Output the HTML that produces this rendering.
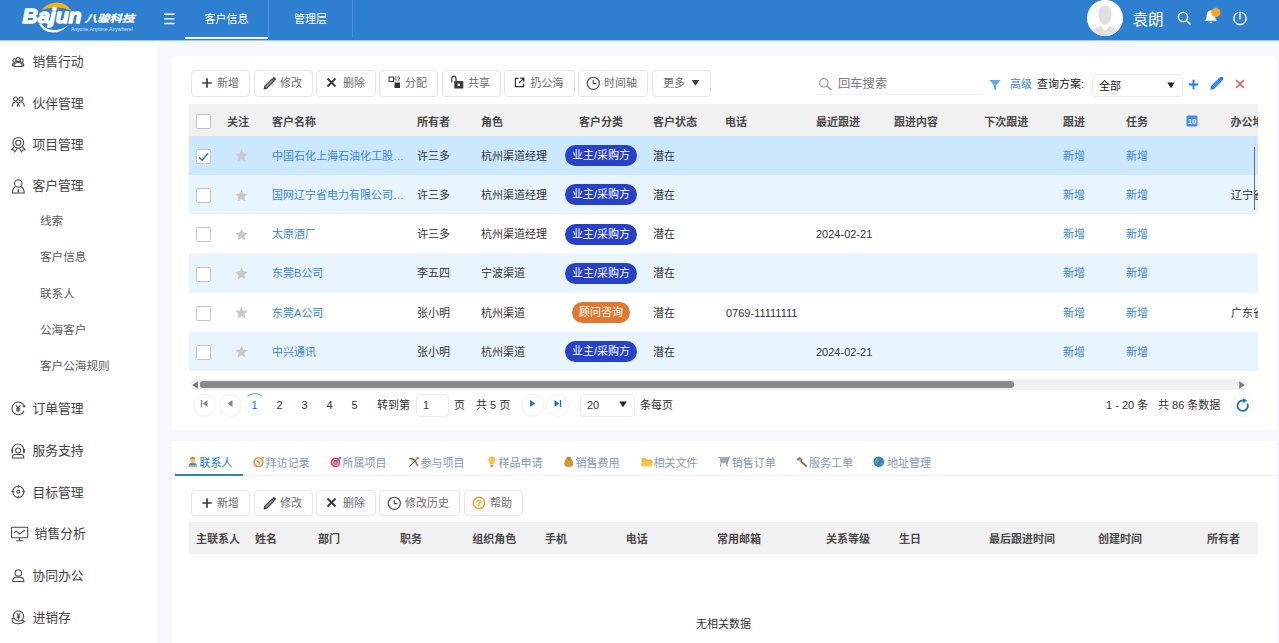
<!DOCTYPE html>
<html lang="zh-CN">
<head>
<meta charset="utf-8">
<title>客户信息</title>
<style>
*{box-sizing:border-box;margin:0;padding:0}
html,body{width:1279px;height:643px;overflow:hidden;background:#f7f8fd;font-family:"Liberation Sans","Noto Sans CJK SC",sans-serif;font-size:12px;color:#333}
.abs{position:absolute}
#hdr{z-index:2;position:absolute;left:0;top:0;width:1279px;height:41px;background:linear-gradient(#2f7fd1 0,#2f7fd1 40px,#a5c8ee 40px,#a5c8ee 41px)}
#side{position:absolute;left:0;top:40px;width:157px;height:603px;background:#fff}
.mi{position:absolute;left:32.400px;font-size:12.800px;color:#444;line-height:20px;white-space:nowrap}
.si{position:absolute;left:40px;font-size:11.600px;color:#5c5c5c;line-height:18px;white-space:nowrap}
.ico{position:absolute;left:10px}
.card{position:absolute;background:#fff;border-radius:4px}
.btn{position:absolute;height:26.500px;border:1px solid #e6e6e6;border-radius:4px;background:#fff;font-size:11px;color:#6c6c6c;line-height:26px;white-space:nowrap}
.btn span{position:absolute;top:-0.800px}
.th{position:absolute;font-weight:bold;font-size:11px;color:#4a4a4a;line-height:16px;white-space:nowrap}
.td{position:absolute;font-size:11px;color:#333;line-height:16px;white-space:nowrap}
.lk{color:#3b87d6}
.row{position:absolute;left:191px;width:1067px;height:39px}
.cb{position:absolute;left:196px;width:15px;height:15px;border:1px solid #c4c4c4;border-radius:1.500px;background:#fff}
.pill{position:absolute;left:566px;width:69px;height:21px;border-radius:11px;background:#2741c8;color:#fff;font-size:11px;line-height:21px;text-align:center;white-space:nowrap}
.tab{position:absolute;top:454.500px;font-size:11px;color:#6e8db8;line-height:16px;white-space:nowrap}
.pg{position:absolute;font-size:11px;color:#333;line-height:16px;white-space:nowrap}
</style>
</head>
<body>
<div id="hdr">
  <!-- logo -->
  <svg class="abs" style="left:15px;top:0" width="130" height="40" viewBox="0 0 130 40">
    <path d="M26.500 9.900 Q32.500 3 41 2.500 Q51.800 2.200 56.300 11 Q49.500 7.600 40.600 7.600 Q33 7.800 26.500 9.900Z" fill="#f6b414"/>
    <path d="M24.400 23.900 Q27 31.500 37.600 32.500 Q46.500 32.500 52.800 25.400 Q45.500 30.300 38.600 30 Q30.500 29.600 26.400 23.900Z" fill="#fff"/>
    <text x="7.600" y="22.900" font-family="Liberation Sans,sans-serif" font-style="italic" font-weight="bold" font-size="21" fill="#fff" stroke="#fff" stroke-width="1.300" stroke-linejoin="round" textLength="59" lengthAdjust="spacingAndGlyphs">Bajun</text>
    <text x="69.800" y="21.900" font-family="Liberation Sans,Noto Sans CJK SC,sans-serif" font-style="italic" font-weight="bold" font-size="10" fill="#fff" stroke="#fff" stroke-width="0.250" textLength="49.500" lengthAdjust="spacingAndGlyphs">八骏科技</text>
    <text x="55.900" y="30.900" font-family="Liberation Sans,sans-serif" font-size="4.900" fill="#dce9f8" textLength="62" lengthAdjust="spacingAndGlyphs">Anyone,Anytime,Anywhere!</text>
  </svg>
  <!-- hamburger -->
  <svg class="abs" style="left:163px;top:12px" width="13" height="13" viewBox="0 0 13 13"><path d="M1 2.300H11.600M1 6.900H11.600M1 11.500H11.600" stroke="#fff" stroke-width="1.400"/></svg>
  <!-- tabs -->
  <div class="abs" style="left:185px;top:0;width:84px;height:37px;border-right:1px solid #4c90d9;color:#fff;font-size:11px;line-height:38.600px;text-align:center">客户信息</div>
  <div class="abs" style="left:185px;top:37px;width:83px;height:2px;background:#fff"></div>
  <div class="abs" style="left:269px;top:0;width:84px;height:37px;border-right:1px solid #4c90d9;color:#fff;font-size:11px;line-height:38.600px;text-align:center">管理层</div>
  <!-- right -->
  <div class="abs" style="left:1087px;top:0;width:36px;height:36px;border-radius:18px;background:#fff;overflow:hidden">
    <svg width="36" height="36" viewBox="0 0 36 36"><path d="M11.500 13Q11.500 5.500 18 5.500Q24.500 5.500 24.500 13Q24.500 19 22 22.500Q20 24.800 18 24.800Q16 24.800 14 22.500Q11.500 19 11.500 13Z" fill="#e0e0e0"/><path d="M3 36 Q4 28.500 13.500 26 L18 31 L22.500 26 Q32 28.500 33 36Z" fill="#e0e0e0"/></svg>
  </div>
  <div class="abs" style="left:1132.500px;top:8.600px;color:#fff;font-size:15.600px;line-height:22px">袁朗</div>
  <svg class="abs" style="left:1175.900px;top:10.300px" width="16" height="16" viewBox="0 0 16 16"><circle cx="7" cy="7" r="4.600" fill="none" stroke="#fff" stroke-width="1.300"/><path d="M10.500 10.500L14 14" stroke="#fff" stroke-width="1.300" stroke-linecap="round"/></svg>
  <svg class="abs" style="left:1200.800px;top:4.800px" width="22" height="22" viewBox="0 0 20 20"><path d="M9 5 C6 5 5.200 7.500 5.200 10 C5.200 12.500 4 13.700 3.300 14.300 L14.700 14.300 C14 13.700 12.800 12.500 12.800 10 C12.800 7.500 12 5 9 5Z" fill="#fff"/><path d="M7.500 15.300 Q9 17.800 10.500 15.300Z" fill="#fff"/><circle cx="13.500" cy="6.800" r="4.200" fill="#f8a51c"/></svg>
  <svg class="abs" style="left:1231.700px;top:10.250px" width="16" height="16" viewBox="0 0 16 16"><path d="M5.800 2.500 A6.200 6.200 0 1 0 10.200 2.500" fill="none" stroke="#fff" stroke-width="1.300" stroke-linecap="round"/><path d="M8 2.200V8.800" stroke="#fff" stroke-width="1.300" stroke-linecap="round"/></svg>
</div>

<div id="side">
  <svg class="abs" style="left:0;top:-40px" width="34" height="683" viewBox="0 0 34 683" fill="none" stroke="#484848" stroke-width="1.050">
    <!-- sales action: group of 3 -->
    <circle cx="14.600" cy="60.400" r="1.700"/><circle cx="21.600" cy="60.400" r="1.700"/>
    <path d="M13.800 65.800H12.500Q12.200 63.200 14.400 62.700M22.400 65.800H23.700Q24 63.200 21.800 62.700"/>
    <circle cx="18.100" cy="59.500" r="2.100" fill="#fff"/><path d="M14 66.400Q13.600 62.500 18.100 62.500Q22.600 62.500 22.200 66.400Z" fill="#fff"/>
    <!-- partner: 2 people -->
    <circle cx="15.600" cy="99" r="2"/><circle cx="20.900" cy="99" r="2"/>
    <path d="M12.300 106.600Q12.600 102 15.600 102Q18.400 102 19.500 106.600M17 106.600Q18.100 102 20.900 102Q23.900 102 24.300 106.600"/>
    <!-- project: medal -->
    <circle cx="18.300" cy="142.800" r="5.400"/><circle cx="18.300" cy="142.800" r="2.600"/>
    <path d="M14.300 146.600L11.600 149.800L14 149.900L14.900 152L17.300 148.300M22.300 146.600L25 149.800L22.600 149.900L21.700 152L19.300 148.300"/>
    <!-- customer: person with tie -->
    <circle cx="18.300" cy="183.400" r="3.700"/>
    <path d="M15.600 186.500Q12.600 188 12.300 193H24.300Q24 188 21 186.500"/>
    <path d="M18.300 189V192.600" stroke-width="1.300"/>
    <!-- order: yen in refresh circle -->
    <path d="M24.300 406.600A6.300 6.300 0 1 0 24 411"/><path d="M22.800 406.300L24.600 406.800L24.900 405"/>
    <path d="M15.800 405L18.100 407.800L20.400 405M18.100 407.800V412.200M15.900 408.300H20.300M15.900 410.100H20.300"/>
    <!-- service: headset -->
    <circle cx="18.100" cy="450.400" r="2.500"/>
    <path d="M12.500 451V449.600A5.600 5.600 0 0 1 23.700 449.600V451"/>
    <path d="M12.300 449.400V452.300M23.900 449.400V452.300" stroke-width="1.800" stroke-linecap="round"/>
    <path d="M12.400 458Q12.400 454.400 15 454.400H21.200Q23.800 454.400 23.800 458Z"/>
    <!-- target -->
    <circle cx="18.300" cy="491.800" r="5.600"/><circle cx="18.300" cy="491.800" r="1.500"/>
    <path d="M18.300 485V487.800M18.300 495.800V498.600M11.500 491.800H14.300M22.300 491.800H25.100"/>
    <!-- analysis: monitor -->
    <rect x="11.500" y="527.200" width="16.200" height="10.500" rx="0.800"/>
    <path d="M13.800 533.200L16.300 531.200L19.700 534L24.800 530.200M19.600 537.700V540.600M16.200 540.800H23"/>
    <!-- cooperate: person -->
    <circle cx="18.300" cy="572.900" r="3.200"/>
    <path d="M12.700 581.500Q12.700 577.200 16.500 577.200H20.100Q23.900 577.200 23.900 581.500Z"/>
    <!-- inventory: yen coin in hand -->
    <path d="M14.800 619.500A5.100 5.100 0 1 1 21.700 620"/>
    <path d="M16.700 613.300L18.500 615.600L20.300 613.300M18.500 615.600V619.500M16.800 616.200H20.200M16.800 617.700H20.200"/>
    <path d="M12.200 618.400Q14.500 618 16 620Q17.500 621.300 20 620.800Q23.500 620 24.500 621.600Q21 624.200 17.500 623.700Q14 623.300 12.200 621.800Z"/>
  </svg>

  <!-- y values relative to #side (top:40) -->
  <div class="mi" style="top:12px">销售行动</div>
  <div class="mi" style="top:54px">伙伴管理</div>
  <div class="mi" style="top:95px">项目管理</div>
  <div class="mi" style="top:136px">客户管理</div>

  <div class="si" style="top:172px">线索</div>
  <div class="si" style="top:208.400px">客户信息</div>
  <div class="si" style="top:244.600px">联系人</div>
  <div class="si" style="top:280.600px">公海客户</div>
  <div class="si" style="top:317px">客户公海规则</div>
  <div class="mi" style="top:359px">订单管理</div>
  <div class="mi" style="top:401px">服务支持</div>
  <div class="mi" style="top:443px">目标管理</div>
  <div class="mi" style="top:484px;left:34.600px">销售分析</div>
  <div class="mi" style="top:526px">协同办公</div>
  <div class="mi" style="top:568px">进销存</div>
</div>

<div class="card" id="c1" style="left:172px;top:56px;width:1104px;height:374px;border-radius:5px 5px 0 0"></div>
<div class="card" id="c2" style="left:172px;top:440.500px;width:1104px;height:215px;border-radius:0"></div>

<!--MAIN-->
<div class="btn" style="left:191px;top:70px;width:59px"><svg class="abs" style="left:8.700px;top:5.500px" width="12" height="12" viewBox="0 0 12 12"><path d="M6 1.300V10.700M1.300 6H10.700" stroke="#3a3a3a" stroke-width="1.700"/></svg><span style="left:25px">新增</span></div>
<div class="btn" style="left:254px;top:70px;width:59px"><svg class="abs" style="left:6.500px;top:4.700px" width="15" height="15" viewBox="0 0 15 15"><path d="M2.200 12.800L2.900 10.200L10 3.100L11.900 5L4.800 12.100Z" fill="#a0a0a0" stroke="#3a3a3a" stroke-width="1.100" stroke-linejoin="round"/><path d="M1.800 13.200L2.500 10.600L4.400 12.500Z" fill="#3a3a3a"/><path d="M10.300 2.200L11.300 1.200Q12 0.700 12.700 1.400L13.600 2.300Q14.200 3 13.700 3.700L12.700 4.700Z" fill="#3a3a3a"/></svg><span style="left:25px">修改</span></div>
<div class="btn" style="left:316px;top:70px;width:60px"><svg class="abs" style="left:9.200px;top:6px" width="11" height="11" viewBox="0 0 11 11"><path d="M1.500 1.500L9.500 9.500M9.500 1.500L1.500 9.500" stroke="#3a3a3a" stroke-width="1.900"/></svg><span style="left:26px">删除</span></div>
<div class="btn" style="left:379px;top:70px;width:59px"><svg class="abs" style="left:7.500px;top:5px" width="13" height="13" viewBox="0 0 13 13"><rect x="1" y="1" width="4.500" height="4.500" fill="none" stroke="#333" stroke-width="1"/><rect x="7" y="1" width="4.500" height="3" fill="none" stroke="#333" stroke-width="1" stroke-dasharray="1.500 1"/><rect x="6.500" y="6.500" width="5.500" height="5.500" fill="#333"/></svg><span style="left:25px">分配</span></div>
<div class="btn" style="left:442px;top:70px;width:59px"><svg class="abs" style="left:7px;top:4.300px" width="14" height="15" viewBox="0 0 14 15"><path d="M1.800 7.500V3.800Q1.800 1.200 3.900 1.200Q6 1.200 6 3.800V6" fill="none" stroke="#3a3a3a" stroke-width="1.200"/><rect x="4.300" y="6" width="9" height="7.500" rx="0.500" fill="#3a3a3a"/><rect x="7.600" y="8.600" width="2.400" height="2.400" fill="#fff"/></svg><span style="left:25px">共享</span></div>
<div class="btn" style="left:504px;top:70px;width:71px"><svg class="abs" style="left:9px;top:5.700px" width="11" height="11" viewBox="0 0 12 12"><path d="M5 1.500H1.500V10.500H10.500V7" fill="none" stroke="#333" stroke-width="1.300"/><path d="M5.500 6.500L10.500 1.500M6.800 1.300H10.700V5.200" fill="none" stroke="#333" stroke-width="1.400"/></svg><span style="left:25.6px">扔公海</span></div>
<div class="btn" style="left:578px;top:70px;width:70px"><svg class="abs" style="left:6.700px;top:4.600px" width="14.600" height="14.600" viewBox="0 0 14 14"><circle cx="7" cy="7" r="5.800" fill="none" stroke="#4a4a4a" stroke-width="1.100"/><path d="M7 3.500V7.300H10" fill="none" stroke="#4a4a4a" stroke-width="1.100"/></svg><span style="left:25px">时间轴</span></div>
<div class="btn" style="left:652px;top:70px;width:59px"><svg class="abs" style="left:38px;top:8px" width="9" height="8" viewBox="0 0 9 8"><path d="M0.700 1H8.300L4.500 6.800Z" fill="#3a3a3a"/></svg><span style="left:10px">更多</span></div>
<svg class="abs" style="left:818px;top:77px" width="14" height="14" viewBox="0 0 14 14"><circle cx="5.800" cy="5.800" r="4.200" fill="none" stroke="#999" stroke-width="1.100"/><path d="M9 9L12.800 12.800" stroke="#999" stroke-width="1.500" stroke-linecap="round"/></svg>
<div class="abs" style="left:838px;top:75px;font-size:12.300px;line-height:18px;color:#7a7a7a">回车搜索</div>
<div class="abs" style="left:817px;top:94px;width:165px;height:1px;background:#f3f3f3"></div>
<svg class="abs" style="left:989px;top:78.500px" width="12" height="12" viewBox="0 0 12 12"><path d="M0.500 1H11.500L7.200 6.200V11.300L4.800 9.800V6.200Z" fill="#62a6ec"/></svg>
<div class="abs lk" style="left:1010px;top:76px;font-size:11px;line-height:16px">高级</div>
<div class="abs" style="left:1037px;top:76px;font-size:11px;line-height:16px;color:#222">查询方案:</div>
<div class="abs" style="left:1092px;top:74px;width:91px;height:23px;border:1px solid #ebebeb;border-radius:4px;background:#fff"></div>
<div class="abs" style="left:1099px;top:77.700px;font-size:11px;line-height:16px;color:#222">全部</div>
<svg class="abs" style="left:1167px;top:82px" width="8" height="7" viewBox="0 0 8 7"><path d="M0.300 0.500H7.700L4 6.300Z" fill="#222"/></svg>
<svg class="abs" style="left:1188px;top:79px" width="11" height="11" viewBox="0 0 11 11"><path d="M5.500 0.800V10.200M0.800 5.500H10.200" stroke="#1a7ef0" stroke-width="1.900"/></svg>
<svg class="abs" style="left:1209px;top:76px" width="15" height="15" viewBox="0 0 15 15"><path d="M1.300 13.700L2 10L9.800 2.200L12.800 5.200L5 13Z" fill="#1a7ef0"/><circle cx="12.300" cy="2.700" r="2" fill="#1a7ef0"/><path d="M3.800 10.200L10.300 3.700M4.800 11.200L11.300 4.700" stroke="#9cc8fa" stroke-width="0.500"/></svg>
<svg class="abs" style="left:1235px;top:79px" width="10" height="10" viewBox="0 0 10 10"><path d="M1 1L9 9M9 1L1 9" stroke="#f0564f" stroke-width="1.600"/></svg>
<div class="abs" style="left:189px;top:104px;width:1069px;height:32px;background:#f1f1f1"></div>
<div class="abs" style="left:189px;top:136px;width:1069px;height:39px;background:#cce8ff"></div>
<div class="abs" style="left:189px;top:175px;width:1069px;height:39px;background:#e8f4fe"></div>
<div class="abs" style="left:189px;top:214px;width:1069px;height:40px;background:#ffffff"></div>
<div class="abs" style="left:189px;top:254px;width:1069px;height:39px;background:#e8f4fe"></div>
<div class="abs" style="left:189px;top:293px;width:1069px;height:39px;background:#ffffff"></div>
<div class="abs" style="left:189px;top:332px;width:1069px;height:39px;background:#e8f4fe"></div>
<div class="abs" style="left:189px;top:253px;width:1069px;height:1px;background:#f3f9fe"></div>
<div class="th" style="left:227px;top:113.500px">关注</div>
<div class="th" style="left:272px;top:113.500px">客户名称</div>
<div class="th" style="left:417px;top:113.500px">所有者</div>
<div class="th" style="left:481px;top:113.500px">角色</div>
<div class="th" style="left:579px;top:113.500px">客户分类</div>
<div class="th" style="left:653px;top:113.500px">客户状态</div>
<div class="th" style="left:725px;top:113.500px">电话</div>
<div class="th" style="left:816px;top:113.500px">最近跟进</div>
<div class="th" style="left:894px;top:113.500px">跟进内容</div>
<div class="th" style="left:984.3px;top:113.500px">下次跟进</div>
<div class="th" style="left:1063px;top:113.500px">跟进</div>
<div class="th" style="left:1126px;top:113.500px">任务</div>
<div class="th" style="left:1230.500px;top:113.500px;width:27.500px;overflow:hidden">办公地</div>
<svg class="abs" style="left:1186px;top:115px" width="12" height="12" viewBox="0 0 12 12"><rect x="0.500" y="0.500" width="11" height="11" rx="1.500" fill="#3d8ef0"/><text x="6" y="9" font-family="Liberation Sans,sans-serif" font-weight="bold" font-size="7.500" fill="#fff" text-anchor="middle" textLength="8.500" lengthAdjust="spacingAndGlyphs">10</text></svg>
<div class="cb" style="top:113.500px"></div>
<div class="cb" style="top:149px"></div>
<svg class="abs" style="left:198px;top:151.5px" width="11" height="10" viewBox="0 0 11 10"><path d="M1 5.200L4.200 8.200L10 1.500" fill="none" stroke="#1a73d9" stroke-width="1.400"/></svg>
<svg class="abs" style="left:234.500px;top:149.44px" width="13" height="13" viewBox="0 0 13 13"><path d="M6.500 0.500L8.300 4.600L12.700 5L9.400 8L10.400 12.400L6.500 10.100L2.600 12.400L3.600 8L0.300 5L4.700 4.600Z" fill="#c8c8c8"/></svg>
<div class="td lk" style="left:272px;top:147.84px;width:135px;overflow:hidden;text-overflow:ellipsis">中国石化上海石油化工股份有限公司</div>
<div class="td" style="left:417px;top:147.84px">许三多</div>
<div class="td" style="left:481px;top:147.84px">杭州渠道经理</div>
<div class="pill" style="left:565.0px;top:145px;width:72px;background:#2741c8">业主/采购方</div>
<div class="td" style="left:653px;top:147.84px">潜在</div>
<div class="td lk" style="left:1063px;top:147.84px">新增</div>
<div class="td lk" style="left:1126px;top:147.84px">新增</div>
<div class="cb" style="top:188px"></div>
<svg class="abs" style="left:234.500px;top:188.61px" width="13" height="13" viewBox="0 0 13 13"><path d="M6.500 0.500L8.300 4.600L12.700 5L9.400 8L10.400 12.400L6.500 10.100L2.600 12.400L3.600 8L0.300 5L4.700 4.600Z" fill="#c8c8c8"/></svg>
<div class="td lk" style="left:272px;top:187.01px;width:135px;overflow:hidden;text-overflow:ellipsis">国网辽宁省电力有限公司沈阳</div>
<div class="td" style="left:417px;top:187.01px">许三多</div>
<div class="td" style="left:481px;top:187.01px">杭州渠道经理</div>
<div class="pill" style="left:565.0px;top:184px;width:72px;background:#2741c8">业主/采购方</div>
<div class="td" style="left:653px;top:187.01px">潜在</div>
<div class="td lk" style="left:1063px;top:187.01px">新增</div>
<div class="td lk" style="left:1126px;top:187.01px">新增</div>
<div class="td" style="left:1231px;top:187.01px;width:27px;overflow:hidden">辽宁省</div>
<div class="cb" style="top:227px"></div>
<svg class="abs" style="left:234.500px;top:227.78px" width="13" height="13" viewBox="0 0 13 13"><path d="M6.500 0.500L8.300 4.600L12.700 5L9.400 8L10.400 12.400L6.500 10.100L2.600 12.400L3.600 8L0.300 5L4.700 4.600Z" fill="#c8c8c8"/></svg>
<div class="td lk" style="left:272px;top:226.18px;width:135px;overflow:hidden;text-overflow:ellipsis">太原酒厂</div>
<div class="td" style="left:417px;top:226.18px">许三多</div>
<div class="td" style="left:481px;top:226.18px">杭州渠道经理</div>
<div class="pill" style="left:565.0px;top:224px;width:72px;background:#2741c8">业主/采购方</div>
<div class="td" style="left:653px;top:226.18px">潜在</div>
<div class="td" style="left:816px;top:226.18px">2024-02-21</div>
<div class="td lk" style="left:1063px;top:226.18px">新增</div>
<div class="td lk" style="left:1126px;top:226.18px">新增</div>
<div class="cb" style="top:267px"></div>
<svg class="abs" style="left:234.500px;top:266.94px" width="13" height="13" viewBox="0 0 13 13"><path d="M6.500 0.500L8.300 4.600L12.700 5L9.400 8L10.400 12.400L6.500 10.100L2.600 12.400L3.600 8L0.300 5L4.700 4.600Z" fill="#c8c8c8"/></svg>
<div class="td lk" style="left:272px;top:265.34px;width:135px;overflow:hidden;text-overflow:ellipsis">东莞B公司</div>
<div class="td" style="left:417px;top:265.34px">李五四</div>
<div class="td" style="left:481px;top:265.34px">宁波渠道</div>
<div class="pill" style="left:565.0px;top:263px;width:72px;background:#2741c8">业主/采购方</div>
<div class="td" style="left:653px;top:265.34px">潜在</div>
<div class="td lk" style="left:1063px;top:265.34px">新增</div>
<div class="td lk" style="left:1126px;top:265.34px">新增</div>
<div class="cb" style="top:306px"></div>
<svg class="abs" style="left:234.500px;top:306.12px" width="13" height="13" viewBox="0 0 13 13"><path d="M6.500 0.500L8.300 4.600L12.700 5L9.400 8L10.400 12.400L6.500 10.100L2.600 12.400L3.600 8L0.300 5L4.700 4.600Z" fill="#c8c8c8"/></svg>
<div class="td lk" style="left:272px;top:304.51px;width:135px;overflow:hidden;text-overflow:ellipsis">东莞A公司</div>
<div class="td" style="left:417px;top:304.51px">张小明</div>
<div class="td" style="left:481px;top:304.51px">杭州渠道</div>
<div class="pill" style="left:572.0px;top:302px;width:58px;background:#e0782f">顾问咨询</div>
<div class="td" style="left:653px;top:304.51px">潜在</div>
<div class="td" style="left:726px;top:304.51px">0769-11111111</div>
<div class="td lk" style="left:1063px;top:304.51px">新增</div>
<div class="td lk" style="left:1126px;top:304.51px">新增</div>
<div class="td" style="left:1231px;top:304.51px;width:27px;overflow:hidden">广东省</div>
<div class="cb" style="top:345px"></div>
<svg class="abs" style="left:234.500px;top:345.29px" width="13" height="13" viewBox="0 0 13 13"><path d="M6.500 0.500L8.300 4.600L12.700 5L9.400 8L10.400 12.400L6.500 10.100L2.600 12.400L3.600 8L0.300 5L4.700 4.600Z" fill="#c8c8c8"/></svg>
<div class="td lk" style="left:272px;top:343.69px;width:135px;overflow:hidden;text-overflow:ellipsis">中兴通讯</div>
<div class="td" style="left:417px;top:343.69px">张小明</div>
<div class="td" style="left:481px;top:343.69px">杭州渠道</div>
<div class="pill" style="left:565.0px;top:341px;width:72px;background:#2741c8">业主/采购方</div>
<div class="td" style="left:653px;top:343.69px">潜在</div>
<div class="td" style="left:816px;top:343.69px">2024-02-21</div>
<div class="td lk" style="left:1063px;top:343.69px">新增</div>
<div class="td lk" style="left:1126px;top:343.69px">新增</div>
<div class="abs" style="left:1254px;top:147px;width:1px;height:63px;background:#6c6c6c"></div>
<div class="abs" style="left:191px;top:379px;width:1056px;height:10.500px;background:#f1f1f1;border-radius:5px"></div>
<div class="abs" style="left:200px;top:381px;width:814px;height:6.500px;background:#8a8a8a;border-radius:3px"></div>
<svg class="abs" style="left:191.500px;top:380.500px" width="6" height="8" viewBox="0 0 6 8"><path d="M5.800 0.300V7.700L0.300 4Z" fill="#777"/></svg>
<svg class="abs" style="left:1238.500px;top:380.500px" width="6" height="8" viewBox="0 0 6 8"><path d="M0.200 0.300V7.700L5.700 4Z" fill="#777"/></svg>
<div class="abs" style="left:193px;top:394px;width:23px;height:23px;border-radius:12px;border:1px solid #f2f2f2"></div>
<div class="abs" style="left:218.5px;top:394px;width:23px;height:23px;border-radius:12px;border:1px solid #f2f2f2"></div>
<svg class="abs" style="left:200px;top:399.300px" width="9" height="9" viewBox="0 0 9 9"><path d="M1.500 1V8" stroke="#858585" stroke-width="1.300"/><path d="M7.500 1V8L2.800 4.500Z" fill="#858585"/></svg>
<svg class="abs" style="left:226px;top:399.300px" width="9" height="9" viewBox="0 0 9 9"><path d="M6.500 1V8L1.500 4.500Z" fill="#858585"/></svg>
<div class="abs" style="left:244px;top:393px;width:22px;height:22px;border-radius:11px;border:1px solid #5a9be0;clip-path:inset(0 0 18.500px 0)"></div>
<div class="pg" style="left:251.5px;top:397px;color:#1a73d9">1</div>
<div class="pg" style="left:276.5px;top:397px;color:#333">2</div>
<div class="pg" style="left:301.5px;top:397px;color:#333">3</div>
<div class="pg" style="left:326.5px;top:397px;color:#333">4</div>
<div class="pg" style="left:351.5px;top:397px;color:#333">5</div>
<div class="pg" style="left:377px;top:397px">转到第</div>
<div class="abs" style="left:416px;top:394px;width:33px;height:23px;border:1px solid #ececec;border-radius:4px"></div>
<div class="pg" style="left:423px;top:397px">1</div>
<div class="pg" style="left:454px;top:397px">页</div>
<div class="pg" style="left:476px;top:397px">共 5 页</div>
<div class="abs" style="left:521px;top:394px;width:23px;height:23px;border-radius:12px;border:1px solid #f2f2f2"></div>
<div class="abs" style="left:546px;top:394px;width:23px;height:23px;border-radius:12px;border:1px solid #f2f2f2"></div>
<svg class="abs" style="left:528px;top:399.300px" width="9" height="9" viewBox="0 0 9 9"><path d="M2 1V8L7 4.500Z" fill="#1a73d9"/></svg>
<svg class="abs" style="left:553px;top:399.300px" width="9" height="9" viewBox="0 0 9 9"><path d="M7.500 1V8" stroke="#1a73d9" stroke-width="1.300"/><path d="M1.500 1V8L6.200 4.500Z" fill="#1a73d9"/></svg>
<div class="abs" style="left:580px;top:394px;width:54.500px;height:23px;border:1px solid #ececec;border-radius:4px"></div>
<div class="pg" style="left:587px;top:397px">20</div>
<svg class="abs" style="left:619px;top:401px" width="8" height="7" viewBox="0 0 8 7"><path d="M0.300 0.500H7.700L4 6.300Z" fill="#222"/></svg>
<div class="pg" style="left:640px;top:397px">条每页</div>
<div class="pg" style="left:1106px;top:397px">1 - 20 条</div>
<div class="pg" style="left:1158px;top:397px">共 86 条数据</div>
<div class="abs" style="left:1231px;top:394px;width:23px;height:23px;border-radius:12px;border:1px solid #f3f3f3"></div>
<svg class="abs" style="left:1235px;top:397.500px" width="15" height="15" viewBox="0 0 15 15"><path d="M9.600 2.900A5.200 5.200 0 1 0 12.400 5.600" fill="none" stroke="#1a73c9" stroke-width="1.800"/><path d="M7.800 0.200L12.300 2.200L8.700 5.200Z" fill="#1a73c9"/></svg>
<div class="abs" style="left:172px;top:475px;width:1103px;height:1px;background:#f5f5f5"></div>
<div class="abs" style="left:175px;top:474px;width:68px;height:2px;background:#2e7dd1"></div>
<svg class="abs" style="left:186.5px;top:455.500px" width="12.650" height="11.500" viewBox="0 0 11 10"><circle cx="5" cy="3.200" r="2.300" fill="#f6c455"/><path d="M2.700 2.600Q3 0.600 5 0.700Q7 0.600 7.300 2.600Q5 1.600 2.700 2.600Z" fill="#b8862a"/><path d="M1.400 9.600Q1.200 5.700 5 5.700Q8.800 5.700 8.600 9.600Z" fill="#3d8fe2"/><rect x="1.600" y="8.300" width="6.800" height="1.400" rx="0.600" fill="#f0b840"/></svg>
<div class="tab" style="left:199.5px;color:#2577d2">联系人</div>
<svg class="abs" style="left:252.5px;top:455.500px" width="12.650" height="11.500" viewBox="0 0 11 10"><circle cx="4.800" cy="5.400" r="3.900" fill="#f3ead8" stroke="#e8913a" stroke-width="1.300"/><circle cx="8.600" cy="1.600" r="0.900" fill="#e8913a"/><path d="M3 3.600L5.400 4.800L4.300 6Z" fill="#e8607a"/><path d="M6.600 7.200L5.400 4.800L4.300 6Z" fill="#7aa0d8"/></svg>
<div class="tab" style="left:265.5px;color:#8197b9">拜访记录</div>
<svg class="abs" style="left:329.5px;top:455.500px" width="12.650" height="11.500" viewBox="0 0 11 10"><circle cx="4.800" cy="5.600" r="4.200" fill="#e6405c"/><circle cx="4.800" cy="5.600" r="2.500" fill="none" stroke="#f7b8c4" stroke-width="0.900"/><circle cx="4.800" cy="5.600" r="0.900" fill="#fbe0e6"/><path d="M4.800 5.600L8.500 1.900" stroke="#3b7fe0" stroke-width="1.100"/><path d="M7.300 0.800L9.800 0.600L9.600 3.100Z" fill="#3b7fe0"/></svg>
<div class="tab" style="left:342.5px;color:#8197b9">所属项目</div>
<svg class="abs" style="left:407.5px;top:455.500px" width="12.650" height="11.500" viewBox="0 0 11 10"><path d="M1 2.200Q6.500 1.500 8.300 8.800" fill="none" stroke="#7a6a5a" stroke-width="1.200"/><path d="M1 2.200L8.300 8.800" stroke="#aaa" stroke-width="0.600"/><path d="M1.200 9.200L8.600 1.600" stroke="#8a6a4a" stroke-width="1"/><path d="M7 1L9.500 0.700L9.200 3.200Z" fill="#c0703a"/></svg>
<div class="tab" style="left:420.5px;color:#8197b9">参与项目</div>
<svg class="abs" style="left:485.5px;top:455.500px" width="12.650" height="11.500" viewBox="0 0 11 10"><path d="M5 0.500Q8 0.500 8 3.500Q8 5 6.500 6.500V7.500H3.500V6.500Q2 5 2 3.500Q2 0.500 5 0.500Z" fill="#f3c64a"/><rect x="3.800" y="7.800" width="2.400" height="1.700" fill="#999"/></svg>
<div class="tab" style="left:498.5px;color:#8197b9">样品申请</div>
<svg class="abs" style="left:562.5px;top:455.500px" width="12.650" height="11.500" viewBox="0 0 11 10"><path d="M3.500 2L3 0.800H7L6.500 2Q9 4 9 7Q9 9.500 5 9.500Q1 9.500 1 7Q1 4 3.500 2Z" fill="#d9952e"/><rect x="3.300" y="2" width="3.400" height="1" fill="#b86a1a"/></svg>
<div class="tab" style="left:575.5px;color:#8197b9">销售费用</div>
<svg class="abs" style="left:640.5px;top:455.500px" width="12.650" height="11.500" viewBox="0 0 11 10"><path d="M0.500 2H4L5 3H9.500V9H0.500Z" fill="#f2b230"/><path d="M0.500 9L2 4.500H10.500L9.500 9Z" fill="#f7c64a"/></svg>
<div class="tab" style="left:653.5px;color:#8197b9">相关文件</div>
<svg class="abs" style="left:717.5px;top:455.500px" width="12.650" height="11.500" viewBox="0 0 11 10"><path d="M0.300 1.300H9.200L8.300 6.300H2.200L1.400 1.300Z" fill="#b0b6c2"/><path d="M0.300 1.300H10M2 3H9M2 4.600H8.700" fill="none" stroke="#8a92a2" stroke-width="0.700"/><path d="M9.800 0.600L7.600 7.200" stroke="#6a8fd0" stroke-width="0.900"/><path d="M2.600 6.500L2 9M7.500 6.500L8.300 9" stroke="#8a92a2" stroke-width="0.900"/></svg>
<div class="tab" style="left:731.7px;color:#8197b9">销售订单</div>
<svg class="abs" style="left:795.5px;top:455.500px" width="12.650" height="11.500" viewBox="0 0 11 10"><path d="M0.400 2.600L3.200 0.700L6 3.300L4.400 5.100L2.800 3.600L1.600 4.200Z" fill="#8a8a8a"/><path d="M4.600 3.900L9.800 8.600L8.800 9.700L3.700 4.900Z" fill="#9a5a2a"/></svg>
<div class="tab" style="left:809.0px;color:#8197b9">服务工单</div>
<svg class="abs" style="left:872.5px;top:455.500px" width="12.650" height="11.500" viewBox="0 0 11 10"><circle cx="5" cy="5" r="4.600" fill="#2f7fd6"/><path d="M2 3Q4 1 5.500 2.500Q6 4 4.500 5Q3 6.500 4 8Q2 7 1.500 5Z" fill="#4cb86a"/><path d="M7 5.500Q8.500 5.500 8.500 7Q7.500 8.500 6.500 7.500Z" fill="#4cb86a"/></svg>
<div class="tab" style="left:887.0px;color:#8197b9">地址管理</div>
<div class="btn" style="left:191px;top:490px;width:59px;height:26px;line-height:27px"><svg class="abs" style="left:8.700px;top:5.500px" width="12" height="12" viewBox="0 0 12 12"><path d="M6 1.300V10.700M1.300 6H10.700" stroke="#3a3a3a" stroke-width="1.700"/></svg><span style="left:25px">新增</span></div>
<div class="btn" style="left:254px;top:490px;width:59px;height:26px;line-height:27px"><svg class="abs" style="left:6.500px;top:4.700px" width="15" height="15" viewBox="0 0 15 15"><path d="M2.200 12.800L2.900 10.200L10 3.100L11.900 5L4.800 12.100Z" fill="#a0a0a0" stroke="#3a3a3a" stroke-width="1.100" stroke-linejoin="round"/><path d="M1.800 13.200L2.500 10.600L4.400 12.500Z" fill="#3a3a3a"/><path d="M10.300 2.200L11.300 1.200Q12 0.700 12.700 1.400L13.600 2.300Q14.200 3 13.700 3.700L12.700 4.700Z" fill="#3a3a3a"/></svg><span style="left:25px">修改</span></div>
<div class="btn" style="left:316px;top:490px;width:60px;height:26px;line-height:27px"><svg class="abs" style="left:9.200px;top:6px" width="11" height="11" viewBox="0 0 11 11"><path d="M1.500 1.500L9.500 9.500M9.500 1.500L1.500 9.500" stroke="#3a3a3a" stroke-width="1.900"/></svg><span style="left:26px">删除</span></div>
<div class="btn" style="left:379px;top:490px;width:81px;height:26px;line-height:27px"><svg class="abs" style="left:6.700px;top:4.600px" width="14.600" height="14.600" viewBox="0 0 14 14"><circle cx="7" cy="7" r="5.800" fill="none" stroke="#4a4a4a" stroke-width="1.100"/><path d="M7 3.500V7.300H10" fill="none" stroke="#4a4a4a" stroke-width="1.100"/></svg><span style="left:25px">修改历史</span></div>
<div class="btn" style="left:464px;top:490px;width:59px;height:26px;line-height:27px"><svg class="abs" style="left:7px;top:5.300px" width="14" height="14" viewBox="0 0 14 14"><circle cx="7" cy="7" r="5.700" fill="none" stroke="#f5a31a" stroke-width="1.400"/><text x="7" y="10.200" font-family="Liberation Sans,sans-serif" font-size="9" font-weight="bold" fill="#f5a31a" stroke="#f5a31a" stroke-width="0.300" text-anchor="middle">?</text></svg><span style="left:25px">帮助</span></div>
<div class="abs" style="left:189px;top:522px;width:1069px;height:31.500px;background:#f1f1f1"></div>
<div class="th" style="left:196px;top:530.500px">主联系人</div>
<div class="th" style="left:255px;top:530.500px">姓名</div>
<div class="th" style="left:318px;top:530.500px">部门</div>
<div class="th" style="left:400px;top:530.500px">职务</div>
<div class="th" style="left:472.3px;top:530.500px">组织角色</div>
<div class="th" style="left:545px;top:530.500px">手机</div>
<div class="th" style="left:625.7px;top:530.500px">电话</div>
<div class="th" style="left:717px;top:530.500px">常用邮箱</div>
<div class="th" style="left:826px;top:530.500px">关系等级</div>
<div class="th" style="left:899px;top:530.500px">生日</div>
<div class="th" style="left:989px;top:530.500px">最后跟进时间</div>
<div class="th" style="left:1098px;top:530.500px">创建时间</div>
<div class="th" style="left:1207px;top:530.500px">所有者</div>
<div class="abs" style="left:696px;top:616px;font-size:11px;line-height:16px;color:#333">无相关数据</div>
<!--/MAIN-->
</body>
</html>
